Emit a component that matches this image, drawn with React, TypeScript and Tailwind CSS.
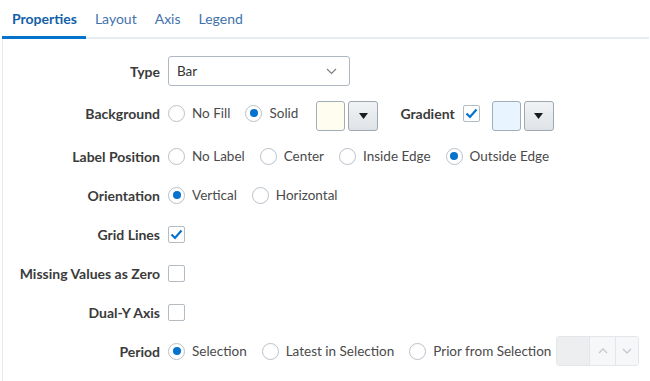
import React from "react";

const FONT = { fontFamily: "Lato, 'Noto Sans', sans-serif" };

function Radio({ checked, label }: { checked?: boolean; label: string }) {
  return (
    <div className="flex items-center">
      <span className="w-[17px] h-[17px] rounded-full border border-[#b9c1c9] bg-white flex items-center justify-center">
        {checked && <span className="w-[8px] h-[8px] rounded-full bg-[#0572ce]" />}
      </span>
      <span className="ml-[7px] text-[13.5px] text-[#4a4a4a]">{label}</span>
    </div>
  );
}

function Check({ checked }: { checked?: boolean }) {
  return (
    <span className="w-[17px] h-[17px] rounded-[2px] border border-[#b3bbc3] bg-white flex items-center justify-center">
      {checked && (
        <svg width="13" height="11" viewBox="0 0 13 11">
          <path d="M1.5 5.5 L5 9 L11.5 1.5" fill="none" stroke="#0572ce" strokeWidth="2.2" />
        </svg>
      )}
    </span>
  );
}

function Swatch({ color }: { color: string }) {
  return (
    <div className="flex items-center gap-[3px]">
      <span className="w-[29px] h-[30px] rounded-[3px] border border-[#a3adb7]" style={{ background: color }} />
      <span className="w-[30px] h-[30px] rounded-[3px] border border-[#9ea8b2] bg-gradient-to-b from-[#f1f3f5] to-[#dfe3e7] flex items-center justify-center">
        <svg width="9" height="6" viewBox="0 0 9 6">
          <path d="M0 0 H9 L4.5 6 Z" fill="#1b1b1b" />
        </svg>
      </span>
    </div>
  );
}

function Row({ label, children, className = "" }: { label: string; children?: React.ReactNode; className?: string }) {
  return (
    <div className={"flex items-center h-[30px] " + className}>
      <div className="w-[157px] text-right text-[14px] font-bold text-[#3b3b3b] whitespace-nowrap">{label}</div>
      <div className="ml-[8px] flex items-center gap-[15px]">{children}</div>
    </div>
  );
}

export default function App() {
  return (
    <div className="w-[650px] h-[381px] bg-white overflow-hidden pl-[2px]" style={FONT}>
      <div className="flex h-[39px] border-b-2 border-[#e7ecf1] w-[647px]">
        <div className="pl-[10px] pr-[9px] flex items-center border-b-[3px] border-[#0572ce] -mb-[2px] text-[14px] font-bold text-[#1160a8]">
          Properties
        </div>
        <div className="px-[9px] flex items-center text-[14px] text-[#3f72ad]">Layout</div>
        <div className="px-[9px] flex items-center text-[14px] text-[#3f72ad]">Axis</div>
        <div className="px-[9px] flex items-center text-[14px] text-[#3f72ad]">Legend</div>
      </div>
      <div className="border-l border-[#e5e9ee] h-[342px] pt-[17px] flex flex-col">
        <Row label="Type">
          <div className="w-[182px] h-[30px] rounded-[3px] border border-[#aeb8c2] flex items-center justify-between pl-[8px] pr-[12px]">
            <span className="text-[13.5px] text-[#333]">Bar</span>
            <svg width="11" height="7" viewBox="0 0 11 7">
              <path d="M1 1 L5.5 5.5 L10 1" fill="none" stroke="#7a7f85" strokeWidth="1.2" />
            </svg>
          </div>
        </Row>
        <Row label="Background" className="mt-[12px]">
          <Radio label="No Fill" />
          <Radio checked label="Solid" />
          <div className="ml-[3px] mt-[5px]">
            <Swatch color="#fffdf0" />
          </div>
          <div className="ml-[7px] flex items-center">
            <span className="text-[14px] font-bold text-[#3b3b3b]">Gradient</span>
            <span className="ml-[8px]">
              <Check checked />
            </span>
            <div className="ml-[12px] mt-[5px]">
              <Swatch color="#e8f4ff" />
            </div>
          </div>
        </Row>
        <Row label="Label Position" className="mt-[13px]">
          <Radio label="No Label" />
          <Radio label="Center" />
          <Radio label="Inside Edge" />
          <Radio checked label="Outside Edge" />
        </Row>
        <Row label="Orientation" className="mt-[9px]">
          <Radio checked label="Vertical" />
          <Radio label="Horizontal" />
        </Row>
        <Row label="Grid Lines" className="mt-[9px]">
          <Check checked />
        </Row>
        <Row label="Missing Values as Zero" className="mt-[9px]">
          <Check />
        </Row>
        <Row label="Dual-Y Axis" className="mt-[9px]">
          <Check />
        </Row>
        <Row label="Period" className="mt-[9px]">
          <Radio checked label="Selection" />
          <Radio label="Latest in Selection" />
          <div className="flex items-center">
            <Radio label="Prior from Selection" />
            <div className="ml-[5px] w-[83px] h-[30px] rounded-[3px] border border-[#e3e7eb] flex overflow-hidden">
              <div className="w-[32px] bg-[#eceef0]" />
              <div className="w-[26px] bg-[#f5f7f9] border-l border-[#e3e7eb] flex items-center justify-center">
                <svg width="10" height="6" viewBox="0 0 10 6">
                  <path d="M1 5 L5 1 L9 5" fill="none" stroke="#c3c8cd" strokeWidth="1.3" />
                </svg>
              </div>
              <div className="flex-1 bg-[#f5f7f9] border-l border-[#e3e7eb] flex items-center justify-center">
                <svg width="10" height="6" viewBox="0 0 10 6">
                  <path d="M1 1 L5 5 L9 1" fill="none" stroke="#c3c8cd" strokeWidth="1.3" />
                </svg>
              </div>
            </div>
          </div>
        </Row>
      </div>
    </div>
  );
}
